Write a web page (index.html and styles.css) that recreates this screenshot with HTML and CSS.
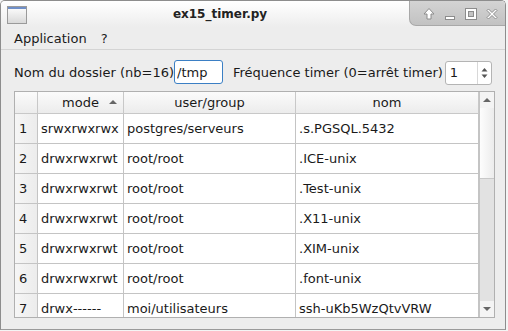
FILE: index.html
```html
<!DOCTYPE html>
<html lang="fr">
<head>
    <meta charset="UTF-8">
    <title>ex15_timer.py</title>
    <link rel="stylesheet" href="styles.css">
</head>
<body>

    <div class="window">
        <div class="titlebar">
            <svg class="app-icon" width="20" height="18" viewBox="0 0 20 18">
                <defs>
                    <linearGradient id="ic" x1="0" y1="0" x2="0" y2="1">
                        <stop offset="0" stop-color="#ffffff"/>
                        <stop offset="1" stop-color="#d8d8d8"/>
                    </linearGradient>
                </defs>
                <rect x="0.5" y="0.5" width="19" height="17" fill="url(#ic)" stroke="#9a9a9a"/>
                <rect x="1" y="1" width="18" height="2" fill="#6f8fc8"/>
            </svg>
            <div class="title">ex15_timer.py</div>
            <div class="wm-buttons">
                <svg width="14" height="14" viewBox="0 0 14 14">
                    <path d="M7 1.5 L12 7 L9 7 L9 12 L5 12 L5 7 L2 7 Z" fill="#fff" stroke="#8c8c8c" stroke-width="1"/>
                </svg>
                <svg width="14" height="14" viewBox="0 0 14 14">
                    <rect x="2.5" y="9.5" width="9" height="3" fill="#fff" stroke="#8c8c8c"/>
                </svg>
                <svg width="14" height="14" viewBox="0 0 14 14">
                    <rect x="1.5" y="1.5" width="11" height="11" fill="#fff" stroke="#8c8c8c"/>
                    <rect x="4.5" y="4.5" width="5" height="5" fill="#c4c4c4" stroke="#8c8c8c"/>
                </svg>
                <svg width="14" height="14" viewBox="0 0 14 14">
                    <path d="M2 3.5 L3.5 2 L7 5.5 L10.5 2 L12 3.5 L8.5 7 L12 10.5 L10.5 12 L7 8.5 L3.5 12 L2 10.5 L5.5 7 Z" fill="#fff" stroke="#8c8c8c" stroke-width="1"/>
                </svg>
            </div>
        </div>

        <div class="menubar">
            <span class="menu-item">Application</span>
            <span class="menu-item">?</span>
        </div>

        <div class="content">
            <div class="form-row">
                <label for="folder">Nom du dossier (nb=16)</label>
                <input type="text" id="folder" class="text-input" value="/tmp">
                <label for="freq" class="freq-label">Fréquence timer (0=arrêt timer)</label>
                <div class="spinbox">
                    <span class="spin-value">1</span>
                    <span class="spin-buttons">
                        <svg width="7" height="12" viewBox="0 0 7 12">
                            <path d="M0.5 4.5 L3.5 1 L6.5 4.5 Z" fill="#555"/>
                            <path d="M0.5 7.5 L3.5 11 L6.5 7.5 Z" fill="#555"/>
                        </svg>
                    </span>
                </div>
            </div>

            <div class="table-view">
                <div class="grid" id="grid">
                    <div class="cell corner"></div>
                    <div class="cell head">mode <span class="sort-arrow"></span></div>
                    <div class="cell head">user/group</div>
                    <div class="cell head">nom</div>
                    <!-- rows are generated below -->
                </div>
                <div class="scrollbar">
                    <div class="scroll-btn"><span class="tri-up"></span></div>
                    <div class="slider"></div>
                    <div class="groove"></div>
                    <div class="scroll-btn"><span class="tri-down"></span></div>
                </div>
            </div>
        </div>
    </div>

    <script>
        const rows = [
            ['srwxrwxrwx', 'postgres/serveurs', '.s.PGSQL.5432'],
            ['drwxrwxrwt', 'root/root', '.ICE-unix'],
            ['drwxrwxrwt', 'root/root', '.Test-unix'],
            ['drwxrwxrwt', 'root/root', '.X11-unix'],
            ['drwxrwxrwt', 'root/root', '.XIM-unix'],
            ['drwxrwxrwt', 'root/root', '.font-unix'],
            ['drwx------', 'moi/utilisateurs', 'ssh-uKb5WzQtvVRW']
        ];
        const grid = document.getElementById('grid');

        rows.forEach((row, i) => {
            const num = document.createElement('div');
            num.className = 'cell rownum';
            num.textContent = i + 1;
            grid.appendChild(num);
            row.forEach(text => {
                const cell = document.createElement('div');
                cell.className = 'cell data';
                cell.textContent = text;
                grid.appendChild(cell);
            });
        });
    </script>

</body>
</html>
```

FILE: styles.css
```css
* {
    box-sizing: border-box;
}
body {
    margin: 0;
    width: 508px;
    height: 331px;
    overflow: hidden;
    background-color: #f4f4f4;
    font-family: "DejaVu Sans", sans-serif;
    font-size: 13px;
    color: #1a1a1a;
}
.window {
    width: 506px;
    height: 330px;
    border: 1px solid #8d8d8d;
    border-bottom-color: #9a9a9a;
    border-radius: 5px 5px 0 0;
    background-color: #ededed;
    overflow: hidden;
}
.titlebar {
    position: relative;
    height: 26px;
    display: flex;
    align-items: center;
    background: linear-gradient(#ffffff, #ededed);
}
.app-icon {
    margin-left: 6px;
    margin-top: 2px;
}
.title {
    position: absolute;
    left: 0;
    right: 0;
    text-align: center;
    padding-right: 66px;
    font-weight: bold;
    font-size: 12px;
    color: #222;
}
.wm-buttons {
    position: absolute;
    top: -1px;
    right: -1px;
    height: 26px;
    width: 97px;
    display: flex;
    align-items: center;
    justify-content: space-around;
    padding: 2px 4px 0 8px;
    background: linear-gradient(#d4d4d4, #c2c2c2);
    border-left: 1px solid #a8a8a8;
    border-bottom: 1px solid #a8a8a8;
    border-radius: 0 5px 0 7px;
}
.menubar {
    height: 23px;
    display: flex;
    align-items: center;
    gap: 14px;
    padding-left: 13px;
    border-bottom: 1px solid #d4d4d4;
}
.content {
    padding: 10px 0 0 13px;
}
.form-row {
    display: flex;
    align-items: center;
    height: 24px;
}
.text-input {
    width: 49px;
    height: 24px;
    margin-left: 0;
    padding: 0 0 0 2px;
    border: 1px solid #3b7fc4;
    border-radius: 3px;
    font-family: inherit;
    font-size: 13px;
    color: #1a1a1a;
    background-color: #fff;
    outline: none;
}
.freq-label {
    margin-left: 10px;
}
.spinbox {
    display: flex;
    width: 47px;
    height: 24px;
    margin-left: 2px;
    margin-top: 2px;
    border: 1px solid #b4b4b4;
    border-radius: 3px;
    background-color: #fff;
}
.spin-value {
    flex: 1;
    padding-left: 4px;
    line-height: 22px;
}
.spin-buttons {
    width: 14px;
    display: flex;
    align-items: center;
    justify-content: center;
    border-left: 1px solid #d8d8d8;
}
.table-view {
    display: flex;
    width: 481px;
    height: 227px;
    margin-top: 7px;
    border: 1px solid #b0b0b0;
    background-color: #fff;
}
.grid {
    display: grid;
    grid-template-columns: 23px 86px 172px 183px;
    grid-template-rows: 22px;
    grid-auto-rows: 30px;
    overflow: hidden;
    align-content: start;
}
.cell {
    border-right: 1px solid #c4c4c4;
    border-bottom: 1px solid #c4c4c4;
    display: flex;
    align-items: center;
    white-space: nowrap;
    overflow: hidden;
}
.head, .corner {
    background: linear-gradient(#fbfbfb, #ececec);
    border-color: #c8c8c8;
    justify-content: center;
    position: relative;
}
.rownum {
    background: linear-gradient(90deg, #f6f6f6, #ececec);
    padding-left: 4px;
}
.data {
    padding-left: 3px;
}
.sort-arrow {
    position: absolute;
    right: 6px;
    top: 8px;
    border-left: 4px solid transparent;
    border-right: 4px solid transparent;
    border-bottom: 4px solid #666;
}
.scrollbar {
    width: 15px;
    display: flex;
    flex-direction: column;
    background-color: #e2e2e2;
    border-left: 1px solid #c4c4c4;
}
.scroll-btn {
    height: 16px;
    display: flex;
    align-items: center;
    justify-content: center;
    background-color: #f4f4f4;
}
.tri-up {
    border-left: 4px solid transparent;
    border-right: 4px solid transparent;
    border-bottom: 4px solid #666;
}
.tri-down {
    border-left: 4px solid transparent;
    border-right: 4px solid transparent;
    border-top: 4px solid #666;
}
.slider {
    height: 71px;
    background: linear-gradient(90deg, #fdfdfd, #ececec);
    border-bottom: 1px solid #c8c8c8;
}
.groove {
    flex: 1;
}
```
